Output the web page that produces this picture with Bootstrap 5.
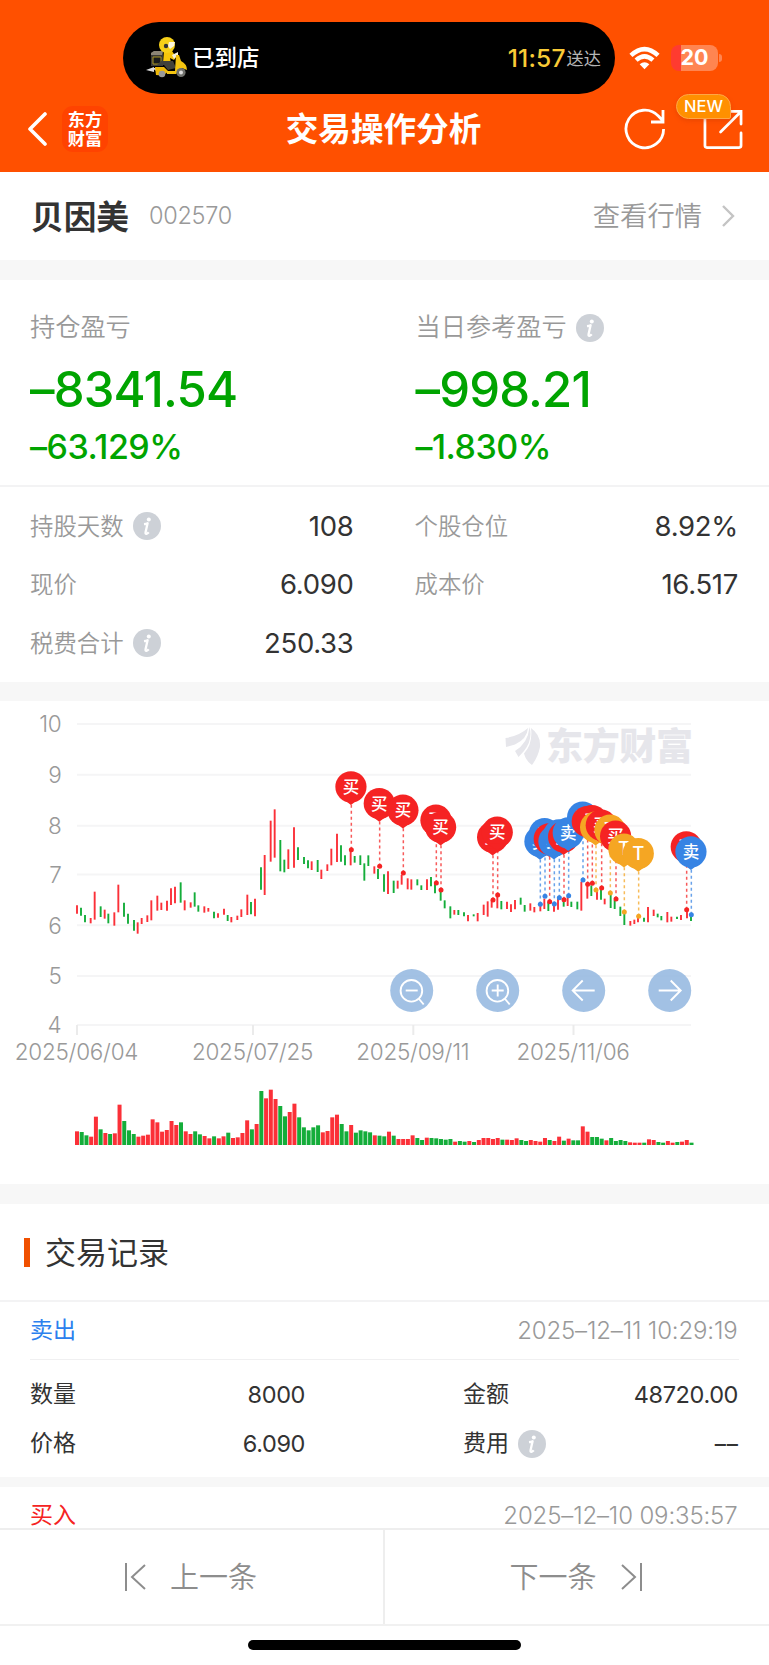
<!DOCTYPE html>
<html lang="zh-CN">
<head>
<meta charset="utf-8">
<meta name="viewport" content="width=device-width, initial-scale=1">
<title>交易操作分析</title>
<link href="https://cdn.jsdelivr.net/npm/bootstrap@5.3.0/dist/css/bootstrap.min.css" rel="stylesheet">
<style>
:root{--brand:#ff5000;--ink:#333;--mute:#999;--up:#f52323;--down:#00a400;--gap:#f7f7f7;--rule:#f3f3f4}
html,body{height:1665px;overflow:hidden}
body{font-family:Inter,"Noto Sans CJK SC",sans-serif;color:var(--ink);background:#fff;line-height:1;font-size:23px}
svg{display:block;flex:none}
.topbar{background:var(--brand);height:172px;color:#fff}
.island{margin:22px 0 0 123px;width:492px;height:72px;border-radius:36px;background:#000;padding:0 14px 0 22px}
.island-state{font-size:22.5px;font-weight:500;margin-left:4px;padding-top:1px}
.island-time{color:#f9cb36;font-size:24.5px;font-weight:500;letter-spacing:.2px}
.island-note{color:#b5b5b5;font-size:17.2px;padding-top:2px;margin-left:1px}
.battery{width:47px;height:26px;border-radius:8px;background:linear-gradient(90deg,#ff3b30 10px,#ff8551 10px);font-size:21.5px;font-weight:700;margin-left:11px}
.wifi,.battery,.nub{margin-top:21px}
.nub{width:3px;height:8px;border-radius:0 3px 3px 0;background:#ff8551;margin-left:1px}
.titlebar{height:70px;padding:0 26px 0 27px;display:grid;grid-template-columns:1fr auto 1fr}
.title{font-size:32.6px;font-weight:700;font-family:"Noto Sans CJK SC",sans-serif;margin:-3px 3px 0 0}
.logo{width:46px;height:46px;border-radius:11px;background:#ff4300;font:700 17.2px/19px "Noto Sans CJK SC",sans-serif;margin-left:15px;padding-top:3px}
.new-tag{position:absolute;left:-27px;top:-14px;width:55px;height:25px;border-radius:13px 13px 2px 13px;background:#ff9000;border:1px solid #ffa746;font-size:16.5px;font-weight:500;box-shadow:0 2px 4px #d03c0066}
.stock{height:88px;padding:0 33px 0 31px}
.stock-name{font:700 32.7px/1 "Noto Sans CJK SC",sans-serif;margin-top:-2px}
.stock-code{font-size:23.5px;color:var(--mute);margin-left:20px;letter-spacing:-.3px}
.quote{font-size:27.3px;color:var(--mute);padding-top:2px}
.band{height:20px;background:var(--gap)}
.light{font-weight:350}
.pnl{height:207px;border-bottom:2px solid var(--rule);padding:34px 0 0 30px}
.pnl-label{font-size:25.2px;height:28px;color:var(--mute)}
.pnl-big{font-size:49px;font-weight:500;color:var(--down);height:50px;margin-top:22px;letter-spacing:-.85px}
.pnl-pct{font-size:34px;font-weight:500;color:var(--down);height:36px;margin-top:15px;letter-spacing:-.5px}
.facts{height:195px;padding:10px 31px 0 30px}
.fact{height:58.6px;font-size:23.4px;color:var(--mute)}
.fact b{font-size:27.5px;font-weight:400;color:var(--ink);letter-spacing:-.3px}
.tip{width:28px;height:28px;margin-left:9px}
.chart{height:483px}
.ax{font-size:22.5px;fill:var(--mute);font-weight:350;letter-spacing:-.25px}
.head{height:98px;padding-left:24px;border-bottom:2px solid var(--rule)}
.head i{width:6px;height:29px;background:#f05000;margin-right:15px}
.head span{font-size:31px}
.rec-top{height:58px;margin:0 30px;padding-right:1.5px;border-bottom:1px solid #f0f0f1}
.rec-top time{font-size:24px;color:var(--mute);font-weight:350;letter-spacing:-.15px}
.rec-grid{height:117px;padding:10px 30px 0}
.rec-row{height:49px;display:grid;grid-template-columns:275px 275px;column-gap:158px;}
.rec-row b{font-weight:400;font-size:23.5px;letter-spacing:-.4px}
.rec-row .none{letter-spacing:1px;margin-right:-1px;transform:scaleX(.95)}
.thin{height:10px}
.footer-nav{height:98px;bottom:39px;background:#fff;border-top:2px solid #eee;border-bottom:2px solid #f1f1f1;color:#8d8d8d;font-size:29px}
.footer-nav div{width:383px;padding-right:2px}
.footer-nav div+div{width:386px;border-left:2px solid #eee}
.home{height:39px;bottom:0;background:#fff;padding-top:14px}
.home div{width:273px;height:10px;border-radius:5px;background:#000}
</style>
</head>
<body>
<svg width="0" height="0" class="position-absolute"><defs>
<symbol id="info" viewBox="0 0 28 28"><circle cx="14" cy="14" r="14" fill="#cdd1d7"/><circle cx="15.800" cy="7.600" r="2" fill="#fff"/><path d="M11 12.200q2-.2 3.600-.9L12.600 20q-.5 2.300 1.200 1.700 1-.4 1.900-1.500" fill="none" stroke="#fff" stroke-width="2.300" stroke-linejoin="round"/></symbol>
</defs></svg>

<header class="topbar">
  <div class="d-flex align-items-center">
    <div class="island d-flex align-items-center">
      <svg width="43" height="42" viewBox="0 0 43 42">
        <path d="M1 33l8-3v5zM7 31h9l-2 5z" fill="#ddd"/>
        <path d="M6 16l3-2h9v15H6z" fill="#3b3a36"/><path d="M6 16l3-2h9l-1 4H6z" fill="#8b8576"/><path d="M8 20h8v7H8z" fill="#17191b" stroke="#a99522"/>
        <path d="M19 14h8l4 6-2 3-4-2 1 5h-8z" fill="#f5c60c"/><path d="M27 18l6-3v3l-4 4z" fill="#f6f3df"/>
        <path d="M16 24h12l3 7-8 2-4-5h-7z" fill="#43423b"/>
        <path d="M10 30h9l4 4q-2 5-12 4z" fill="#eeb808"/><path d="M31 18h3l2 6q6 3 6 9l-5-2-6 6h-9v-3h8z" fill="#f4c410"/>
        <circle cx="17" cy="37" r="3.300" fill="#999"/><circle cx="36" cy="35.500" r="4.600" fill="#70716d"/><circle cx="36" cy="35.500" r="2" fill="#ddd"/>
        <circle cx="22" cy="8" r="8" fill="#f7d018"/><path d="M24 5l6 0-1 4-4 3-2-3z" fill="#fff8dc"/><circle cx="21" cy="9" r="2.200" fill="#333"/>
      </svg>
      <span class="island-state">已到店</span>
      <span class="ms-auto island-time">11:57</span><span class="island-note">送达</span>
    </div>
    <svg class="wifi" style="margin-left:14px" width="31" height="24" viewBox="0 0 32 24" fill="none" stroke="#fff" stroke-width="4.600"><path d="M2 9.300q14-13 28 0M7.300 14.300q8.700-8 17.400 0"/><path d="M16 23.500l-5-5q5-4 10 0z" fill="#fff" stroke="none"/></svg>
    <div class="battery d-flex align-items-center justify-content-center">20</div><div class="nub"></div>
  </div>
  <div class="titlebar align-items-center">
    <div class="d-flex align-items-center">
      <svg width="20" height="34" viewBox="0 0 20 34" fill="none" stroke="#fff" stroke-width="3.600" stroke-linecap="round" stroke-linejoin="round"><path d="M18 2L3 17l15 15"/></svg>
      <div class="logo text-center">东方<br>财富</div>
    </div>
    <div class="title">交易操作分析</div>
    <div class="d-flex justify-content-end">
      <svg width="42" height="42" viewBox="0 0 42 42" fill="none" stroke="#fff" stroke-width="2.800" style="margin-right:37px"><path d="M39.600 21a18.800 18.800 0 1 1-5-12.800L39 13M39 2v12H27"/></svg>
      <div class="position-relative">
        <svg width="40" height="42" viewBox="0 0 41 42" fill="none" stroke="#fff" stroke-width="2.800" stroke-linecap="round"><path d="M2 8v30q0 2 2 2h33q2 0 2-2V25M26 3h13v13M39 3L18 24"/></svg>
        <span class="new-tag d-flex align-items-center justify-content-center">NEW</span>
      </div>
    </div>
  </div>
</header>

<section class="stock d-flex align-items-center">
  <span class="stock-name">贝因美</span><span class="stock-code light">002570</span>
  <span class="quote light ms-auto">查看行情</span>
  <svg width="16" height="22" viewBox="0 0 16 22" fill="none" stroke="#c4c4c4" stroke-width="2.400" style="margin-left:18px"><path d="M3 1l10 10L3 21"/></svg>
</section>
<div class="band"></div>

<section class="pnl row g-0">
  <div class="col-6">
    <div class="pnl-label light d-flex align-items-center">持仓盈亏</div>
    <div class="pnl-big d-flex align-items-center">–8341.54</div>
    <div class="pnl-pct d-flex align-items-center">–63.129%</div>
  </div>
  <div class="col-6 ps-3">
    <div class="pnl-label light d-flex align-items-center">当日参考盈亏<svg class="tip"><use href="#info"/></svg></div>
    <div class="pnl-big d-flex align-items-center">–998.21</div>
    <div class="pnl-pct d-flex align-items-center">–1.830%</div>
  </div>
</section>

<section class="facts d-flex" style="gap:61px">
  <div style="width:324px">
    <div class="fact d-flex align-items-center"><span class="light">持股天数</span><svg class="tip"><use href="#info"/></svg><b class="ms-auto">108</b></div>
    <div class="fact d-flex align-items-center"><span class="light">现价</span><b class="ms-auto">6.090</b></div>
    <div class="fact d-flex align-items-center"><span class="light">税费合计</span><svg class="tip"><use href="#info"/></svg><b class="ms-auto">250.33</b></div>
  </div>
  <div style="width:324px">
    <div class="fact d-flex align-items-center"><span class="light">个股仓位</span><b class="ms-auto">8.92%</b></div>
    <div class="fact d-flex align-items-center"><span class="light">成本价</span><b class="ms-auto">16.517</b></div>
  </div>
</section>
<div class="band" style="height:19px"></div>

<section class="chart"><svg id="plot" width="769" height="483" viewBox="0 701 769 483"></svg></section>
<div class="band"></div>

<section>
  <div class="head d-flex align-items-center"><i></i><span>交易记录</span></div>
  <div class="rec-top d-flex align-items-center justify-content-between"><span style="color:#2b80ee">卖出</span><time>2025–12–11 10:29:19</time></div>
  <div class="rec-grid">
    <div class="rec-row"><div class="d-flex align-items-center justify-content-between">数量<b>8000</b></div><div class="d-flex align-items-center justify-content-between">金额<b>48720.00</b></div></div>
    <div class="rec-row"><div class="d-flex align-items-center justify-content-between">价格<b>6.090</b></div><div class="d-flex align-items-center">费用<svg class="tip"><use href="#info"/></svg><b class="ms-auto none">––</b></div></div>
  </div>
  <div class="band thin"></div>
  <div class="rec-top d-flex align-items-center justify-content-between"><span style="color:#f52323">买入</span><time>2025–12–10 09:35:57</time></div>
</section>

<nav class="footer-nav position-fixed start-0 end-0 d-flex light">
  <div class="d-flex align-items-center justify-content-center" style="gap:24px"><svg width="22" height="28" viewBox="0 0 22 28" fill="none" stroke="#8d8d8d" stroke-width="2"><path d="M2 0v28M21 2L8 14l13 12"/></svg>上一条</div>
  <div class="d-flex align-items-center justify-content-center" style="gap:24px">下一条<svg width="22" height="28" viewBox="0 0 22 28" fill="none" stroke="#8d8d8d" stroke-width="2"><path d="M20 0v28M1 2l13 12L1 26"/></svg></div>
</nav>
<div class="home position-fixed start-0 end-0"><div class="mx-auto"></div></div>

<script src="https://cdn.jsdelivr.net/npm/bootstrap@5.3.0/dist/js/bootstrap.bundle.min.js"></script>
<script>
const RED='#fb3038', GREEN='#14ad3a';
// daily high/low bars in thirds of a pixel, counted from x=30, y=700; direction in the first letter
const bars=`r141,616,641 g153,623,647 g165,645,667 r182,654,670 r194,575,659 g212,619,651 r224,629,656 g235,641,670 r253,637,677 r265,554,637 g282,608,650 g294,641,671 g312,660,692 r323,667,701 r335,654,672 r352,646,666 r364,601,661 r382,587,632 r394,608,630 r411,602,632 r423,565,615 r435,560,610 g452,547,608 r464,601,631 r482,607,623 g494,577,620 g505,616,635 r523,619,638 r535,624,635 g552,635,655 r564,640,653 r582,626,644 g593,645,663 r604,651,667 r622,647,660 r634,628,651 r652,584,645 g663,606,643 r675,596,649 g693,502,569 r704,465,585 r722,362,485 r734,328,473 g751,420,514 g763,479,517 r775,448,507 r792,382,503 g804,442,480 g822,471,492 g834,481,505 r845,484,510 g863,480,516 r874,509,537 r892,493,513 r904,446,496 r921,401,486
g933,436,485 g945,466,496 r962,452,496 g974,468,488 g991,466,495 g1003,490,542 g1015,466,498 r1033,499,521 g1044,507,537 g1062,523,575 r1074,514,582 g1091,542,579 r1103,542,566 r1115,525,554 r1133,535,568 r1144,538,569 g1162,538,556 g1174,556,570 r1191,538,570 g1203,531,559 g1215,552,580 g1232,574,602 g1244,601,625 g1261,619,655 r1273,630,644 g1285,630,645 g1302,637,649 r1314,645,664 g1331,643,649 r1343,639,664 r1361,614,645 r1373,604,650 r1385,600,623 r1402,586,625 g1414,603,628 r1431,605,627 r1443,613,636 r1455,600,628 g1472,593,614 g1484,615,635
r1501,610,632 r1513,621,637 r1531,615,634 r1543,596,627 g1555,606,633 r1572,610,635 r1584,597,629 g1601,598,620 r1613,590,618 g1624,605,621 g1642,605,628 r1654,545,632 r1672,550,596 g1684,556,588 r1701,570,599 g1713,568,599 r1724,596,613 g1742,583,624 g1754,600,627 g1771,620,648 g1783,640,675 r1801,663,677 r1813,659,672 r1824,650,667 g1842,653,665 r1854,621,667 r1871,629,648 g1883,641,652 g1894,648,661 r1912,636,667 r1924,650,665 g1941,650,657 r1953,645,660 r1971,627,655 g1983,645,663`.split(/\s+/);
const vols='r41 g39 g29 r25 r85 g47 r36 g33 r35 r121 g72 g44 g33 r25 r28 r31 r77 r68 r40 r45 r72 r60 g68 r41 r33 g41 g32 r27 r20 g26 r20 r26 g37 r21 r23 r36 r74 g47 r63 g162 r140 r166 r138 g117 g86 r99 r124 g83 g53 g44 g53 g59 r38 r42 r83 r91 g63 g41 r60 g37 g44 g41 g38 r29 g28 g26 r40 g28 r18 r18 r18 r29 g21 g15 r22 g21 g20 g18 g16 g18 r10 g12 g10 r12 g9 r15 r21 r21 r18 r21 g16 r16 r15 r20 g15 g12 r15 r12 r10 r21 g15 r12 r25 g13 r19 g14 g14 r56 r40 g24 g24 g19 r14 g21 g12 g15 g12 r8 r7 r7 g7 r17 r15 g9 g7 r12 r7 g9 r10 r15 g7'.split(' ');
// trades: side (b buy, s sell, t both), dot x, dot y
const trades='b964,449 b1049,499 b1120,519 b1219,549 b1233,570 b1389,600 b1403,585 s1531,613 s1545,589 b1559,605 s1573,612 s1588,593 b1602,599 s1616,587 s1659,540 b1673,553 b1687,550 t1698,570 b1715,564 t1741,579 b1758,597 t1783,636 t1826,649 b1970,629 s1984,644'.split(' ');
const side={b:['#f52323','买'],s:['#3784e4','卖'],t:['#f5a623','T']};
const col=c=>c==='r'?RED:GREEN;
let s='';
[[10,724],[9,774.8],[8,825.7],[7,874.4],[6,925.2],[5,976],[4,1025]].forEach(([n,y])=>{
  s+=`<path d="M77 ${y}H691" stroke="#f5f5f6" stroke-width="2"/><text class="ax" x="61.500" y="${y+8.300}" text-anchor="end">${n}</text>`;});
[[77,'2025/06/04'],[253,'2025/07/25'],[413.300,'2025/09/11'],[573.500,'2025/11/06']].forEach(([x,t])=>{
  s+=`<path d="M${x} 1025v10" stroke="#ebebeb" stroke-width="2"/><text class="ax" x="${x-.5}" y="1060" text-anchor="middle">${t}</text>`;});
s+=`<g fill="#e6e6eb"><path d="M505.500 738Q519 736 528 728 527 739 515 744.500L506 747zM515 751Q528 743 529.500 727 533 740 524 751L518.500 757zM524 753.500Q533 744 531 728 541 735 540 747 538 757 532 765 526 761 524 753.500z"/><text x="546" y="760" textLength="147" font-size="37" font-weight="900" font-family="Noto Sans CJK SC">东方财富</text></g>`;
bars.forEach(b=>{const [x,a,z]=b.slice(1).split(',').map(Number);
  s+=`<path d="M${30+x/3} ${700+a/3}V${700+z/3}" stroke="${col(b[0])}" stroke-width="1.900"/>`;});
vols.forEach((v,i)=>{const h=+v.slice(1)/3;
  s+=`<rect x="${75+i*4.727}" y="${1145-h}" width="4" height="${h}" fill="${col(v[0])}"/>`;});
let pins='';
trades.forEach(t=>{const [c,l]=side[t[0]];const [a,b]=t.slice(1).split(',').map(Number);
  const x=30+a/3,y=700+b/3,cx=x-.4,cy=y-62.800;
  s+=`<path d="M${x} ${cy+18}V${y}" stroke="${c}" stroke-width="1.500" stroke-dasharray="3 3" opacity=".75"/><circle cx="${x}" cy="${y}" r="2.500" fill="${c}"/>`;
  pins+=`<circle cx="${cx}" cy="${cy}" r="15.600" fill="${c}"/><path d="M${cx-10.500} ${cy+11}Q${cx-4} ${cy+15} ${cx} ${cy+18.200}Q${cx+4} ${cy+15} ${cx+10.500} ${cy+11}z" fill="${c}"/><text x="${cx}" y="${cy+6}" text-anchor="middle" fill="#fff" font-size="${l==='T'?18.500:16.500}" font-weight="500">${l}</text>`;});
s+=pins;
const lens='<circle cx="-.3" cy=".3" r="10.800"/><path d="M7 8l5 6"/>';
[[411.700,lens+'<path d="M-6 0H6"/>'],[497.700,lens+'<path d="M-6 0H6M0-6V6"/>'],[583.700,'<path d="M11 0H-11M-1-10L-11 0-1 10"/>'],[669.700,'<path d="M-11 0H11M1-10L11 0 1 10"/>']].forEach(([x,p])=>{
  s+=`<g transform="translate(${x} 990.500)" fill="none" stroke="#fff" stroke-width="1.900"><circle r="21.500" fill="#98bae1" fill-opacity=".9" stroke="none"/>${p}</g>`;});
document.getElementById('plot').innerHTML=s;
</script>
</body>
</html>
